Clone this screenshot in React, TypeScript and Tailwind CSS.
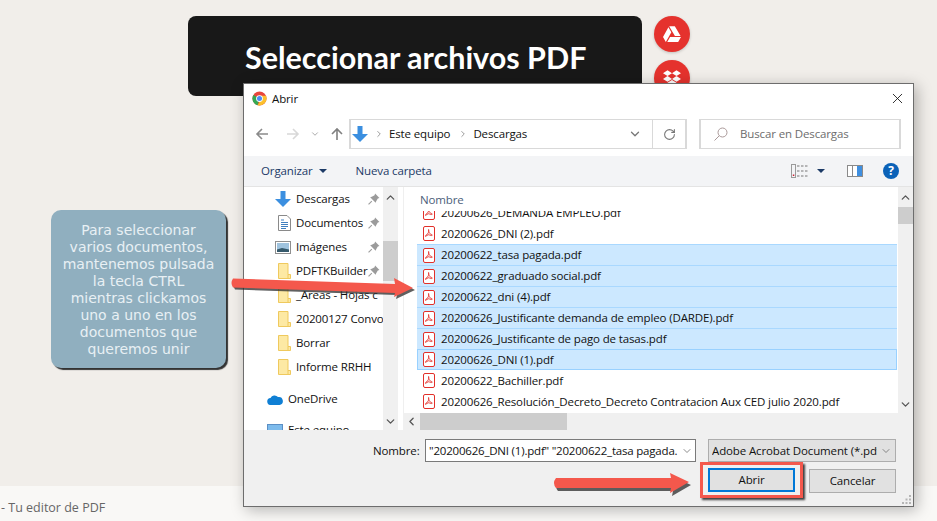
import { ChevronDown, ChevronLeft, ChevronRight, ChevronUp, RotateCw, X } from "lucide-react";
import { FaDropbox, FaGoogleDrive } from "react-icons/fa";

const SEGOE = "font-['Open_Sans','Noto_Sans',sans-serif]";

const sidebar = [
  { name: "Descargas", icon: "download", pin: true },
  { name: "Documentos", icon: "doc", pin: true },
  { name: "Imágenes", icon: "img", pin: true },
  { name: "PDFTKBuilder", icon: "folder", pin: true },
  { name: "_Areas - Hojas c", icon: "folder" },
  { name: "20200127 Convo", icon: "folder" },
  { name: "Borrar", icon: "folder" },
  { name: "Informe RRHH", icon: "folder" },
];

const files = [
  { name: "20200626_DEMANDA EMPLEO.pdf" },
  { name: "20200626_DNI (2).pdf" },
  { name: "20200622_tasa pagada.pdf", selected: true },
  { name: "20200622_graduado social.pdf", selected: true },
  { name: "20200622_dni (4).pdf", selected: true },
  { name: "20200626_Justificante demanda de empleo (DARDE).pdf", selected: true },
  { name: "20200626_Justificante de pago de tasas.pdf", selected: true },
  { name: "20200626_DNI (1).pdf", selected: true, focused: true },
  { name: "20200622_Bachiller.pdf" },
  { name: "20200626_Resolución_Decreto_Decreto Contratacion Aux CED julio 2020.pdf" },
];

function DownloadArrow({ size = 16 }: { size?: number }) {
  return (
    <svg width={size} height={size} viewBox="0 0 16 16" className="shrink-0">
      <path d="M5.500 0h5v8H16l-8 8-8-8h5.500z" fill="#3b8fe0" />
    </svg>
  );
}

function ChromeIcon() {
  return (
    <svg width="15" height="15" viewBox="0 0 16 16" className="shrink-0">
      <circle cx="8" cy="8" r="7.500" fill="#e8453c" />
      <path d="M8 8 1.500 4.200A7.500 7.500 0 0 0 6 15.200z" fill="#34a853" />
      <path d="M8 5h6.900A7.500 7.500 0 0 1 6 15.200L9.800 8z" fill="#fbc02d" />
      <circle cx="8" cy="8" r="3.600" fill="#fff" />
      <circle cx="8" cy="8" r="2.700" fill="#4c8bf5" />
    </svg>
  );
}

function PdfIcon() {
  return (
    <svg width="12" height="15" viewBox="0 0 12 15" fill="none" className="shrink-0">
      <rect x="0.500" y="0.500" width="11" height="14" rx="1.500" fill="#fff" stroke="#e2302a" />
      <path d="M5.600 3.500c-.4 1 .4 2.800 1.200 4 .9.900 2.700 1 2.400 1.800-.3.600-2.200 0-3.400-.6-1.200.3-2.700 1.300-3.300 1.700-.5-.6 1.300-2 2.400-2.700.7-1.200 1.100-3.600.7-4.200z" stroke="#e2302a" strokeWidth="0.900" />
    </svg>
  );
}

function FolderIcon() {
  return (
    <svg width="13" height="16" viewBox="0 0 13 16" className="shrink-0">
      <path d="M.5.500h9.500v11h2.500v4H.5z" fill="#fde9a4" stroke="#efc95d" />
      <path d="M10 11.500v4" stroke="#efc95d" />
    </svg>
  );
}

function DocIcon() {
  return (
    <svg width="13" height="16" viewBox="0 0 13 16" fill="none" className="shrink-0">
      <path d="M.5.500h8.500l3.500 3.500v11.500H.5z" fill="#fff" stroke="#8a8a8a" />
      <path d="M3 5h3M3 7.500h7M3 9.500h7M3 11.500h7M3 13.500h5" stroke="#3f7fc0" />
    </svg>
  );
}

function ImageIcon() {
  return (
    <svg width="16" height="13" viewBox="0 0 16 13" className="shrink-0">
      <rect x="0.500" y="0.500" width="15" height="12" fill="#fff" stroke="#8f8f8f" />
      <rect x="2" y="2" width="12" height="9" fill="#9fc3de" />
      <path d="M2 8.500 7 7l7 1.500V11H2z" fill="#35596b" />
    </svg>
  );
}

function PinIcon() {
  return (
    <svg width="12" height="12" viewBox="0 0 11 11" className="shrink-0">
      <path d="M6.500.5 10.500 4.500 9 5 7.500 7.500 7 9 2 4l1.500-.500L6 2z" fill="#9b9b9b" />
      <path d="M3.500 7.500.5 10.500" stroke="#9b9b9b" />
    </svg>
  );
}

function SidebarIcon({ kind }: { kind: string }) {
  if (kind === "download") return <DownloadArrow />;
  if (kind === "doc") return <DocIcon />;
  if (kind === "img") return <ImageIcon />;
  return <FolderIcon />;
}

function NavArrow({ flip, color, up }: { flip?: boolean; color: string; up?: boolean }) {
  return (
    <svg width="14" height="14" viewBox="0 0 14 14" fill="none" stroke={color} strokeWidth="1.600" className={flip ? "shrink-0 rotate-180" : up ? "shrink-0 rotate-90" : "shrink-0"}>
      <path d="M13 7H2M7 2 2 7l5 5" />
    </svg>
  );
}

function FileDialog() {
  return (
    <div className={`absolute left-[243px] top-[83px] flex h-[424px] w-[671px] flex-col border border-[#6d6d6d] bg-white shadow-[3px_3px_14px_rgba(0,0,0,0.28)] ${SEGOE} text-[11.5px] tracking-[-0.13px] text-[#111]`}>
      <div className="mb-[6px] flex h-[29px] shrink-0 items-center pl-[8px] pr-[7px]">
        <ChromeIcon />
        <span className="ml-[5px]">Abrir</span>
        <X className="ml-auto" size={17} strokeWidth={1.200} color="#111" />
      </div>

      <div className="flex h-[30px] shrink-0 items-center">
        <div className="flex w-[105px] shrink-0 items-center pl-[11px]">
          <NavArrow color="#8a8a8a" />
          <span className="ml-[17px]"><NavArrow flip color="#d8d8d8" /></span>
          <ChevronDown className="ml-[10px]" size={10} strokeWidth={2} color="#9a9a9a" />
          <span className="ml-[10px]"><NavArrow up color="#808080" /></span>
        </div>
        <div className="flex h-[30px] w-[338px] shrink-0 items-center border-2 border-y-[1.5px] border-[#d9d9d9] pl-[1px]">
          <DownloadArrow />
          <ChevronRight className="ml-[6px]" size={10} strokeWidth={2} color="#888" />
          <span className="ml-[5px]">Este equipo</span>
          <ChevronRight className="ml-[8px]" size={10} strokeWidth={2} color="#888" />
          <span className="ml-[5px]">Descargas</span>
          <ChevronDown className="ml-auto mr-[10px]" size={14} strokeWidth={2.200} color="#777" />
          <div className="flex h-full w-[33px] items-center justify-center border-l border-[#d9d9d9]">
            <RotateCw size={13} strokeWidth={2} color="#777" />
          </div>
        </div>
        <div className="ml-[12px] flex h-[30px] w-[202px] shrink-0 items-center border-2 border-y-[1.5px] border-[#d9d9d9] pl-[13px] text-[#6d6d6d]">
          <svg width="14" height="14" viewBox="0 0 14 14" fill="none" stroke="#a99" strokeWidth="1">
            <circle cx="8.500" cy="5.500" r="4.500" />
            <path d="M5.200 8.800.5 13.500" />
          </svg>
          <span className="ml-[12px]">Buscar en Descargas</span>
        </div>
      </div>

      <div className="mt-[7px] flex h-[31px] shrink-0 items-center border-b border-[#e4e4e4] bg-[#f3f4f6] text-[#1c3a66]">
        <span className="ml-[17px]">Organizar</span>
        <span className="ml-[6px] h-0 w-0 border-x-[4px] border-t-[4px] border-x-transparent border-t-[#1c3a66]" />
        <span className="ml-[29px]">Nueva carpeta</span>
        <svg width="17" height="14" viewBox="0 0 17 14" fill="none" className="ml-auto">
          <rect x="0.500" y="0.500" width="4" height="13" stroke="#9a9a9a" />
          <path d="M6 2h2.500M10 2h2.500M14 2h2.500M6 7h2.500M10 7h2.500M14 7h2.500M6 12h2.500M10 12h2.500M14 12h2.500" stroke="#777" />
          <rect x="1.800" y="10.500" width="1.500" height="1.500" fill="#c23" />
        </svg>
        <span className="ml-[9px] h-0 w-0 border-x-[4px] border-t-[4px] border-x-transparent border-t-[#1c3a66]" />
        <svg width="16" height="12" viewBox="0 0 16 12" className="ml-[22px]">
          <rect x="0.500" y="0.500" width="15" height="11" fill="#fff" stroke="#8a8a8a" />
          <rect x="10" y="1" width="5" height="10" fill="#3f8fe0" />
          <path d="M5.500 1v10" stroke="#8a8a8a" />
        </svg>
        <span className="ml-[20px] mr-[14px] flex h-[16px] w-[16px] items-center justify-center rounded-full bg-[#0b62b8] text-[12px] font-bold leading-none text-white">?</span>
      </div>

      <div className="flex min-h-0 flex-1">
        <div className="w-[139px] shrink-0 overflow-hidden">
          {sidebar.map((item) => (
            <div key={item.name} className="flex h-6 items-center">
              <div className="flex w-[52px] shrink-0 justify-end pr-[5px]">
                <SidebarIcon kind={item.icon} />
              </div>
              <span className="min-w-0 flex-1 whitespace-nowrap">{item.name}</span>
              {item.pin && (
                <span className="w-[15px] shrink-0"><PinIcon /></span>
              )}
            </div>
          ))}
          <div className="mt-[8px] flex h-6 items-center">
            <svg width="16" height="11" viewBox="0 0 16 11" className="ml-[23px] mr-[5px] shrink-0">
              <path d="M4 11a3.500 3.500 0 0 1-.5-7A4.500 4.500 0 0 1 11 3a3.500 3.500 0 0 1 1.500 8z" fill="#0f7fd4" />
            </svg>
            <span>OneDrive</span>
          </div>
          <div className="mt-[7px] flex h-6 items-center">
            <span className="ml-[23px] mr-[5px] h-[12px] w-[16px] shrink-0 border border-[#5b8fc5] bg-[#7dbbec]" />
            <span>Este equipo</span>
          </div>
        </div>

        <div className="flex w-[15px] shrink-0 flex-col items-center bg-[#f0f0f0]">
          <ChevronUp className="mt-[4px]" size={13} strokeWidth={2.400} color="#555" />
          <div className="mt-[37px] h-[40px] w-full bg-[#cdcdcd]" />
          <ChevronDown className="mb-[2px] mt-auto" size={13} strokeWidth={2.400} color="#555" />
        </div>

        <div className="flex min-w-0 flex-1 flex-col pl-[5px]">
          <div className="flex min-h-0 flex-1 border-l border-[#efefef]">
            <div className="min-w-0 flex-1 pl-[13px] pr-[1px]">
              <div className="flex h-[24px] items-center pl-[3px] pt-[1px] text-[#4c607a]">Nombre</div>
              <div className="h-[202px] overflow-hidden">
                <div className="mt-[-9px]">
                  {files.map((f) => (
                    <div
                      key={f.name}
                      className={
                        f.focused
                          ? "flex h-[21px] items-center gap-[6px] whitespace-nowrap border border-[#99d1ff] bg-[#cce8ff] pl-[5px]"
                          : f.selected
                            ? "flex h-[21px] items-center gap-[6px] whitespace-nowrap border-t border-[#a9d8ff] bg-[#cce8ff] pl-[6px]"
                            : "flex h-[21px] items-center gap-[6px] whitespace-nowrap pl-[6px]"
                      }
                    >
                      <PdfIcon />
                      <span>{f.name}</span>
                    </div>
                  ))}
                </div>
              </div>
            </div>
            <div className="flex w-[15px] shrink-0 flex-col items-center bg-[#f0f0f0]">
              <ChevronUp className="mt-[4px]" size={13} strokeWidth={2.400} color="#555" />
              <div className="mt-[3px] h-[17px] w-full bg-[#cdcdcd]" />
              <ChevronDown className="mb-[2px] mt-auto" size={13} strokeWidth={2.400} color="#555" />
            </div>
          </div>
          <div className="flex h-[17px] shrink-0 items-center bg-[#f0f0f0]">
            <ChevronLeft className="ml-[2px]" size={13} strokeWidth={2.400} color="#555" />
            <div className="ml-[2px] h-full w-[147px] bg-[#cdcdcd]" />
          </div>
        </div>
      </div>

      <div className="relative h-[76px] shrink-0 bg-[#f0f0f0] pl-[129px] pt-[9px]">
        <div className="flex items-center">
          <span className="w-[52px]">Nombre:</span>
          <div className="flex h-[23px] w-[271px] items-center border border-[#7a7a7a] bg-white pl-[3px]">
            <span className="min-w-0 flex-1 overflow-hidden whitespace-nowrap tracking-[-0.2px]">"20200626_DNI (1).pdf" "20200622_tasa pagada.</span>
            <ChevronDown className="mx-[2px] shrink-0" size={12} strokeWidth={1.500} color="#666" />
          </div>
          <div className="ml-[12px] flex h-[23px] w-[188px] items-center border border-[#adadad] bg-[#e1e1e1] pl-[3px]">
            <span className="min-w-0 flex-1 overflow-hidden whitespace-nowrap">Adobe Acrobat Document (*.pdf)</span>
            <ChevronDown className="mx-[3px] shrink-0" size={12} strokeWidth={1.500} color="#666" />
          </div>
        </div>
        <div className="flex justify-end pr-[17px]">
          <div className="flex h-[36px] w-[103px] items-center justify-center border-[3px] border-[#f4584c] shadow-[2px_2px_2px_rgba(0,0,0,0.75)]">
            <button type="button" className="h-[24px] w-[87px] border-2 border-[#0078d7] bg-[#e1e1e1]">Abrir</button>
          </div>
          <button type="button" className="ml-[6px] mt-[7px] h-[24px] w-[87px] border border-[#adadad] bg-[#e1e1e1]">Cancelar</button>
        </div>
        <svg width="10" height="9" viewBox="0 0 10 9" fill="#b5b5b5" className="absolute bottom-[2px] right-[1px]">
          <rect x="7" y="0" width="2" height="2" />
          <rect x="3.500" y="3.500" width="2" height="2" />
          <rect x="7" y="3.500" width="2" height="2" />
          <rect x="0" y="7" width="2" height="2" />
          <rect x="3.500" y="7" width="2" height="2" />
          <rect x="7" y="7" width="2" height="2" />
        </svg>
      </div>
    </div>
  );
}

export default function App() {
  return (
    <div className="relative flex h-[521px] w-[937px] flex-col overflow-hidden bg-[#f1eeea]">
      <div className="flex flex-1 items-start justify-start gap-3 pl-[188px] pt-4">
        <div className="flex h-[80px] w-[454px] items-center rounded-lg bg-[#181818] pl-[57px] pt-[4px] font-['Lato',sans-serif] text-[30.5px] font-bold text-white">
          Seleccionar archivos PDF
        </div>
        <div className="flex flex-col gap-2">
          <div className="flex h-9 w-9 items-center justify-center rounded-full bg-[#e5322d] text-white shadow-[0_1px_3px_rgba(0,0,0,0.2)]">
            <FaGoogleDrive size={18} />
          </div>
          <div className="flex h-9 w-9 items-center justify-center rounded-full bg-[#e5322d] text-white shadow-[0_1px_3px_rgba(0,0,0,0.2)]">
            <FaDropbox size={18} />
          </div>
        </div>
      </div>

      <div className="flex h-[35px] shrink-0 items-center bg-[#f9f8f6] pl-[1px] pt-[9px] font-['Open_Sans',sans-serif] text-[12.5px] text-[#666]">
        - Tu editor de PDF
      </div>

      <div className="absolute left-[51px] top-[210px] flex h-[158px] w-[175px] items-center justify-center rounded-[10px] bg-[#90afbf] px-2 pt-[2px] text-center font-['DejaVu_Sans',sans-serif] text-[14px] leading-[17px] text-[#e8f0f4] shadow-[2px_2px_1px_#333]">
        <p>
          Para seleccionar
          <br />
          varios documentos,
          <br />
          mantenemos pulsada
          <br />
          la tecla CTRL
          <br />
          mientras clickamos
          <br />
          uno a uno en los
          <br />
          documentos que
          <br />
          queremos unir
        </p>
      </div>

      <FileDialog />

      <svg width="190" height="34" viewBox="0 0 190 34" className="absolute left-[229px] top-[272px]">
        <path d="M4 6.500 166 12 165 6 184 16 165 25 166 21 4 15.500Q1 11 4 6.500Z" fill="#2b2b2b" opacity="0.75" transform="translate(2 2)" />
        <path d="M4 6.500 166 12 165 6 184 16 165 25 166 21 4 15.500Q1 11 4 6.500Z" fill="#f4584c" />
      </svg>
      <svg width="146" height="30" viewBox="0 0 146 30" className="absolute left-[551px] top-[468px]">
        <path d="M5 10 120 10 119 5 138 14 119 25 120 20 5 20Q1 15 5 10Z" fill="#2b2b2b" opacity="0.75" transform="translate(2 3)" />
        <path d="M5 10 120 10 119 5 138 14 119 25 120 20 5 20Q1 15 5 10Z" fill="#f4584c" />
      </svg>
    </div>
  );
}
